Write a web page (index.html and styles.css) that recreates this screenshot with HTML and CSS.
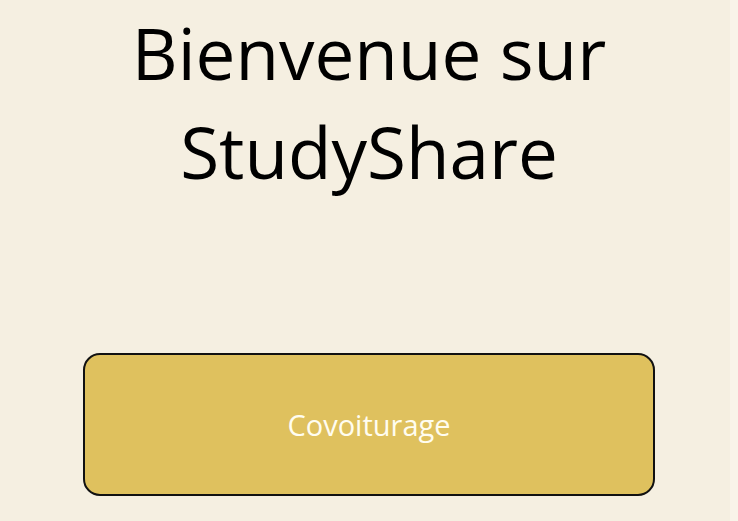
FILE: index.html
```
<!DOCTYPE html>
<html lang="fr">
<head>
<meta charset="utf-8">
<meta name="viewport" content="width=device-width, initial-scale=1">
<title>StudyShare</title>
<link rel="stylesheet" href="styles.css">
</head>
<body>
<main class="welcome">
  <h1 class="title">Bienvenue sur<br>StudyShare</h1>
  <button class="choice" type="button">Covoiturage</button>
</main>
</body>
</html>
```
FILE: styles.css
```
* {
  box-sizing: border-box;
}

html {
  background: #f5efe1;
}

body {
  margin: 0;
  min-height: 100vh;
  border-right: 8px solid #f9f4e9;
  color: #000;
  font-family: "Open Sans", sans-serif;
}

.welcome {
  display: flex;
  flex-direction: column;
  gap: 152px;
  padding: 3px 75px 24px 83px;
}

.title {
  margin: 0;
  font-size: 71px;
  font-weight: 400;
  line-height: 99px;
  text-align: center;
}

.choice {
  width: 100%;
  height: 143px;
  border: 2px solid #111;
  border-radius: 17px;
  background: #dfc15e;
  color: #fffdf0;
  font: inherit;
  font-size: 29px;
}
```
